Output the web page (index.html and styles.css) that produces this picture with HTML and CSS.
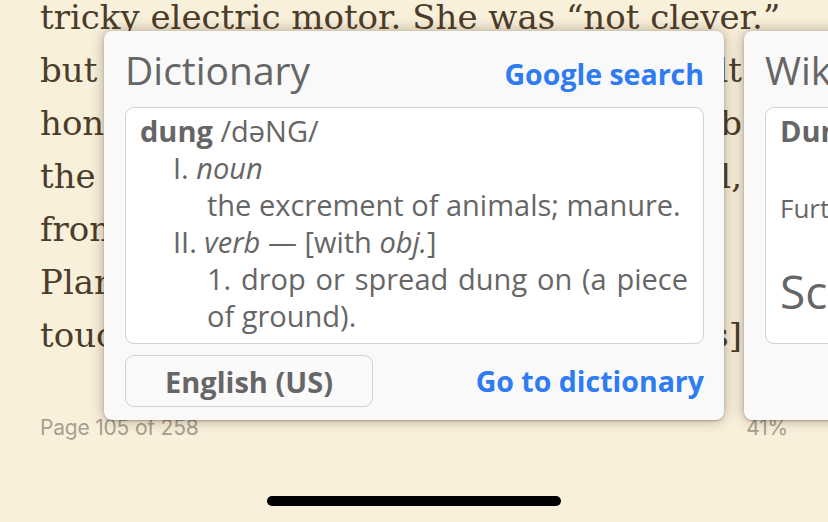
FILE: index.html
```html
<!DOCTYPE html>
<html>
<head>
<meta charset="utf-8">
<link rel="stylesheet" href="styles.css">
</head>
<body>
<div class="reader">
  <div class="book">
    <div class="line first">tricky electric motor. She was “not clever.”</div>
    <div class="line"><span>but</span><span>she had built</span></div>
    <div class="line"><span>hon</span><span>sub</span></div>
    <div class="line"><span>the</span><span>all,</span></div>
    <div class="line"><span>from</span><span></span></div>
    <div class="line"><span>Plan</span><span></span></div>
    <div class="line"><span>touch</span><span>ours]</span></div>
  </div>
  <div class="footer">
    <span class="page-no">Page 105 of 258</span>
    <span class="percent">41%</span>
  </div>
  <div class="home-bar"></div>
</div>

<div class="popups">
  <section class="card">
    <header class="card-head">
      <h2 class="card-title">Dictionary</h2>
      <a class="link">Google search</a>
    </header>
    <div class="entry">
      <div class="hw"><b>dung</b> /dəNG/</div>
      <div class="pos">I. <i>noun</i></div>
      <div class="def">the excrement of animals; manure.</div>
      <div class="pos">II. <i>verb</i> — [with <i>obj.</i>]</div>
      <div class="def">1. drop or spread dung on (a piece of ground).</div>
    </div>
    <footer class="card-foot">
      <button class="lang">English (US)</button>
      <a class="link foot-link">Go to dictionary</a>
    </footer>
  </section>
  <section class="card">
    <header class="card-head">
      <h2 class="card-title">Wikipedia</h2>
    </header>
    <div class="entry wiki">
      <div class="w-title">Dung beetle</div>
      <div class="w-sub">Further information</div>
      <div class="w-big">Scientific classification</div>
    </div>
  </section>
</div>
</body>
</html>
```
FILE: styles.css
```css
html, body {
  margin: 0;
  padding: 0;
}
body {
  width: 828px;
  height: 522px;
  overflow: hidden;
  background: #f9f0dc;
  position: relative;
}
.reader {
  padding-left: 40px;
}
.book {
  margin-top: -9px;
  font-family: "DejaVu Serif", serif;
  font-size: 34px;
  line-height: 53px;
  color: #4c3c2a;
}
.line {
  width: 702px;
  height: 53px;
  display: flex;
  justify-content: space-between;
  white-space: nowrap;
}
.line.first {
  display: block;
  width: auto;
}
.footer {
  width: 748px;
  display: flex;
  justify-content: space-between;
  margin-top: 54px;
  font-family: "Inter", sans-serif;
  font-size: 21px;
  line-height: 24px;
  letter-spacing: -0.2px;
  color: #a79e90;
}
.home-bar {
  width: 294px;
  height: 10px;
  border-radius: 5px;
  background: #000;
  margin: 56px 0 0 227px;
}
.popups {
  position: absolute;
  top: 31px;
  left: 104px;
  display: flex;
  gap: 20px;
}
.card {
  width: 620px;
  height: 389px;
  box-sizing: border-box;
  background: #f9f9f9;
  border-radius: 8px;
  box-shadow: 0 0 14px rgba(60, 40, 10, 0.38), 0 1px 2px rgba(0,0,0,0.25);
  padding: 0 20px 13px 21px;
  display: flex;
  flex-direction: column;
  font-family: "Open Sans", sans-serif;
  color: #666;
  flex-shrink: 0;
}
.card-head {
  height: 76px;
  display: flex;
  justify-content: space-between;
  align-items: center;
}
.card-title {
  margin: 0;
  font-weight: 400;
  font-size: 39px;
  color: #666;
}
.link {
  color: #2e7bf2;
  font-weight: 700;
  font-size: 28.5px;
  position: relative;
  top: 5px;
}
.foot-link {
  top: 0;
}
.entry {
  height: 237px;
  box-sizing: border-box;
  background: #fff;
  border: 1.5px solid #d2d2d2;
  border-radius: 9px;
  padding: 4px 15px 0 14px;
  font-size: 29px;
  line-height: 37px;
}
.hw b { font-weight: 700; }
.pos { padding-left: 33px; }
.def { padding-left: 67px; text-align: justify; }
.card-foot {
  margin-top: 11px;
  display: flex;
  justify-content: space-between;
  align-items: center;
}
.lang {
  width: 248px;
  height: 52px;
  box-sizing: border-box;
  border: 1.5px solid #d2d2d2;
  border-radius: 9px;
  background: #fafafa;
  font-family: "Open Sans", sans-serif;
  font-weight: 700;
  font-size: 29px;
  color: #666;
  padding: 0;
}
.wiki .w-title { font-weight: 700; font-size: 29px; }
.wiki .w-sub { font-size: 26px; margin-top: 41px; }
.wiki .w-big { font-size: 46px; margin-top: 46px; }
```
